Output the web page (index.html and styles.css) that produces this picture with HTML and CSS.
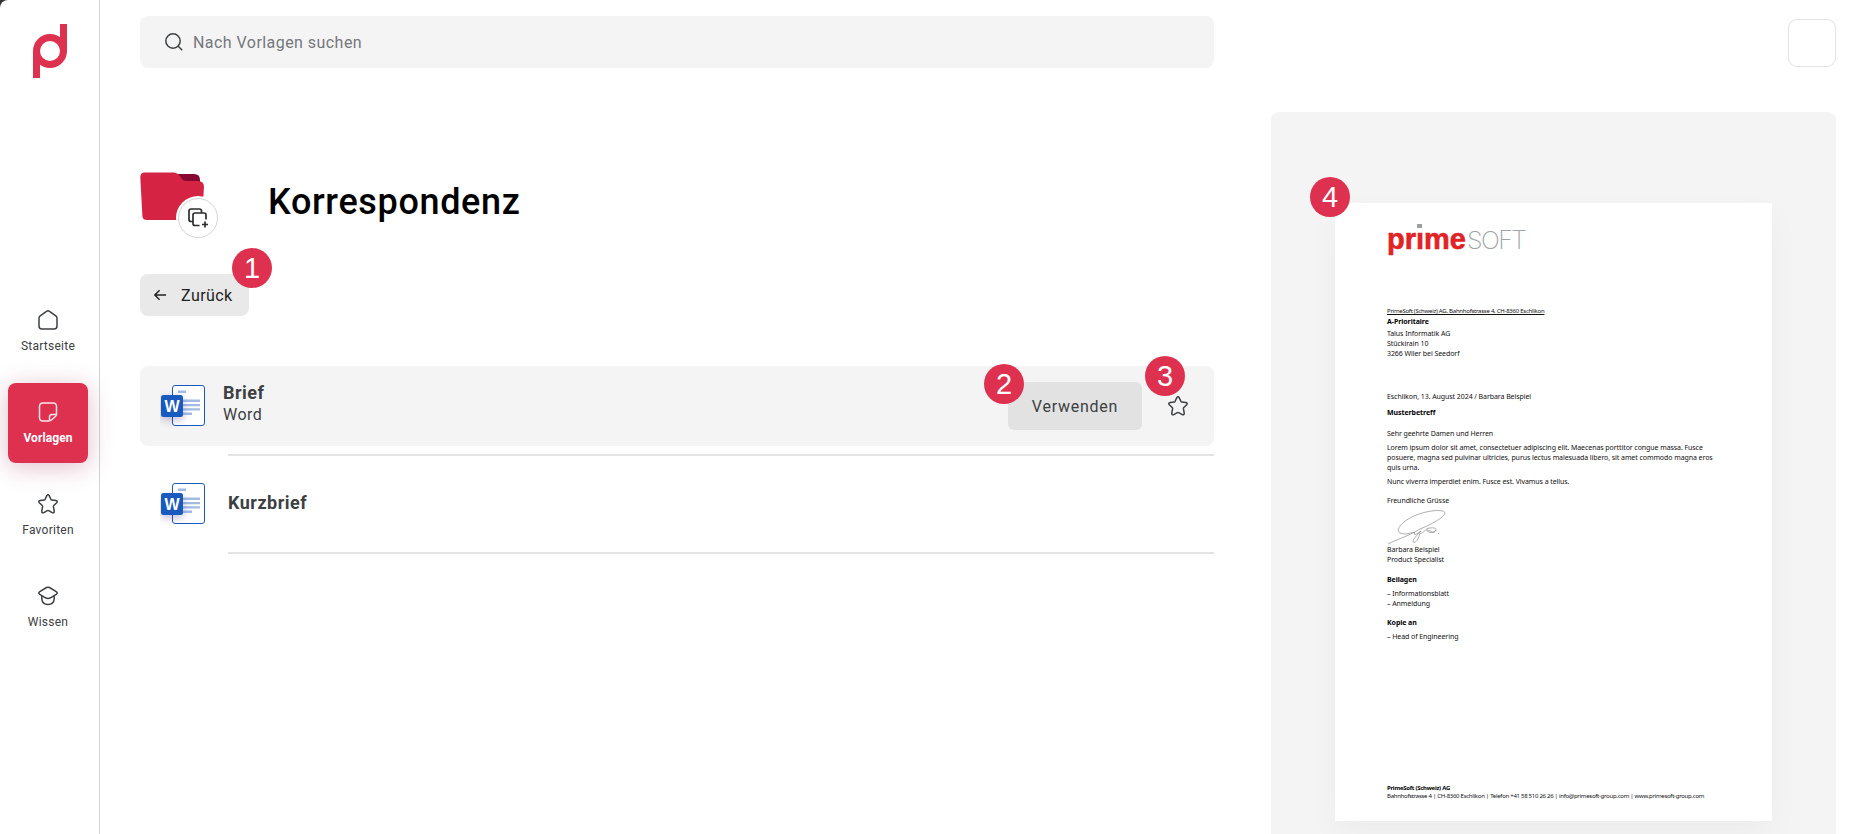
FILE: index.html
```html
<!DOCTYPE html>
<html lang="de">

<head>
    <meta charset="UTF-8">
    <meta name="viewport" content="width=device-width, initial-scale=1.0">
    <title>Korrespondenz - Vorlagen</title>
    <link rel="stylesheet" href="styles.css">
</head>

<body>
    <!-- shared icons -->
    <svg class="sprite">
        <symbol id="icon-star" viewBox="0 0 20 20">
            <path d="M8.8 1.6Q10 -.2 11.2 1.6L12.9 5.3Q13.2 5.9 13.9 6L17.9 6.5Q20 7 18.7 8.7L15.8 11.5Q15.3 12 15.4 12.7L16.2 17Q16.3 19.3 14.2 18.6L10.7 16.6Q10 16.3 9.3 16.6L5.8 18.6Q3.7 19.3 3.8 17L4.6 12.7Q4.7 12 4.2 11.5L1.3 8.7Q0 7 2.1 6.5L6.1 6Q6.8 5.9 7.1 5.3Z" />
        </symbol>
        <symbol id="icon-word" viewBox="0 0 46 44">
            <rect x="12.5" y="1.5" width="32" height="40" rx="2.5" fill="#fff" stroke="#185abd" />
            <path d="M18 7.8h8M23 16.8h17M23 21.1h17M23 25.4h17M23 29.7h9" stroke="#a3bce5" stroke-width="2.4" fill="none" />
            <rect class="word-tile" x="1" y="11" width="22" height="22" rx="2.5" fill="#185abd" />
            <text x="12" y="27.5" text-anchor="middle" class="word-letter">W</text>
        </symbol>
    </svg>

    <div class="app">
        <nav class="sidebar">
            <svg class="logo" viewBox="0 0 34 54">
                <path d="M3.5 54V27a13.5 13.5 0 1 1 13.5 13.5A13.5 13.5 0 0 1 3.5 27M30.5 27V0" />
            </svg>
            <div class="nav">
                <a class="nav-item">
                    <svg class="icon" viewBox="0 0 20 20"><path d="M1 8.2Q1 6.7 2.2 5.8L8.5 1.3Q10 .3 11.5 1.3L17.8 5.8Q19 6.7 19 8.2V16Q19 19 16 19H4Q1 19 1 16Z" /></svg>
                    <span>Startseite</span>
                </a>
                <a class="nav-item active">
                    <svg class="icon" viewBox="0 0 20 20"><path d="M18.5 12.5V4.5Q18.5 1 15 1H5Q1.5 1 1.5 4.5V15.5Q1.5 19 5 19H10.5Q12.5 19 13.8 17.8L17.3 14.5Q18.5 13.5 18.5 12.5H14Q11.5 12.5 11.5 15V19" /></svg>
                    <span>Vorlagen</span>
                </a>
                <a class="nav-item">
                    <svg class="icon"><use href="#icon-star" /></svg>
                    <span>Favoriten</span>
                </a>
                <a class="nav-item">
                    <svg class="icon" viewBox="0 0 20 20"><path d="M8.5 1.5Q10 .8 11.5 1.5L18.2 5.6Q20.2 7 18.2 8.4L12.5 11.8Q10 13 7.5 11.8L1.8 8.4Q-.2 7 1.8 5.6ZM3.8 10V13Q4.3 18.5 10 18.5T16.2 13V10" /></svg>
                    <span>Wissen</span>
                </a>
            </div>
        </nav>

        <main class="content">
            <div class="search">
                <svg class="search-icon" viewBox="0 0 18 18"><circle cx="8" cy="8" r="7.2" /><path d="M13.2 13.2L17.2 17.2" /></svg>
                <span>Nach Vorlagen suchen</span>
            </div>

            <header class="folder-header">
                <div class="folder">
                    <svg viewBox="0 0 68 70">
                        <path d="M34 2H54Q60 2 60 8V20H34Z" fill="#850930" />
                        <path d="M4.5 .5H34Q37 .5 39 3L42 7Q43.5 9 46 9H58Q64 9 64 15L62 44Q61.5 48 57.5 48H7Q2.6 48 2.4 44L.3 5.5Q.3 .5 4.5 .5Z" fill="#d52443" />
                    </svg>
                    <div class="folder-badge">
                        <svg viewBox="0 0 20 20"><path d="M4.5 13.5H3Q1 13.5 1 11.5V3Q1 1 3 1H11.5Q13.5 1 13.5 3V4.5M11.5 17.5H7Q5 17.5 5 15.5V7Q5 5 7 5H16Q18 5 18 7V11.5M17 13.5V19.5M14 16.5H20" /></svg>
                    </div>
                </div>
                <h1>Korrespondenz</h1>
            </header>

            <div class="back">
                <svg viewBox="0 0 14 12"><path d="M6 .8L.9 6L6 11.2M1 6H13" /></svg>
                <span>Zurück</span>
                <b class="marker marker-back">1</b>
            </div>

            <div class="list">
                <div class="row selected">
                    <svg class="file-icon"><use href="#icon-word" /></svg>
                    <div class="file-text">
                        <div class="file-name">Brief</div>
                        <div class="file-type">Word</div>
                    </div>
                    <div class="use-button">
                        Verwenden
                        <b class="marker marker-use">2</b>
                    </div>
                    <div class="favorite">
                        <svg class="icon"><use href="#icon-star" /></svg>
                        <b class="marker marker-favorite">3</b>
                    </div>
                </div>
                <div class="divider"></div>
                <div class="row">
                    <svg class="file-icon"><use href="#icon-word" /></svg>
                    <div class="file-name file-single">Kurzbrief</div>
                </div>
                <div class="divider"></div>
            </div>
        </main>

        <aside class="side">
            <div class="avatar"></div>
            <div class="preview">
                <div class="page">
                    <b class="marker marker-page">4</b>
                    <div class="brand">
                        <span class="brand-prime">pr<span class="brand-i">ı</span>me</span><span class="brand-soft">SOFT</span>
                    </div>
                    <p class="sender">PrimeSoft (Schweiz) AG, Bahnhofstrasse 4, CH-8360 Eschlikon</p>
                    <p class="strong">A-Prioritaire</p>
                    <p class="address">Talus Informatik AG<br>Stückirain 10<br>3266 Wiler bei Seedorf</p>
                    <p class="date">Eschlikon, 13. August 2024 / Barbara Beispiel</p>
                    <p class="strong subject">Musterbetreff</p>
                    <p class="salutation">Sehr geehrte Damen und Herren</p>
                    <p class="body-text">Lorem ipsum dolor sit amet, consectetuer adipiscing elit. Maecenas porttitor congue massa. Fusce<br>posuere, magna sed pulvinar ultricies, purus lectus malesuada libero, sit amet commodo magna eros<br>quis urna.</p>
                    <p class="body-end">Nunc viverra imperdiet enim. Fusce est. Vivamus a tellus.</p>
                    <p class="closing">Freundliche Grüsse</p>
                    <svg class="signature" viewBox="0 0 60 35">
                        <path d="M1 34C10 29 20 27 33 19C48 13 58 6 58 3C57-2 35 1 23 8C12 14 9 21 13 23C20 26 25 21 28 23C26 26 30 24 34 21C27 28 26 30 26 32C29 34 32 28 33 23C38 24 37 18 43 18C49 17 51 20 47 22C43 24 38 20 40 20C45 21 47 24 49 20M51 23.5h1" />
                    </svg>
                    <p>Barbara Beispiel<br>Product Specialist</p>
                    <p class="strong section">Beilagen</p>
                    <p class="items">– Informationsblatt<br>– Anmeldung</p>
                    <p class="strong section">Kopie an</p>
                    <p class="items">– Head of Engineering</p>
                    <div class="page-footer">
                        <p class="strong">PrimeSoft (Schweiz) AG</p>
                        <p>Bahnhofstrasse 4 | CH-8360 Eschlikon | Telefon +41 58 510 26 26 | info@primesoft-group.com | www.primesoft-group.com</p>
                    </div>
                </div>
            </div>
        </aside>
    </div>
</body>

</html>
```
FILE: styles.css
```css
* {
    box-sizing: border-box;
}

body {
    margin: 0;
    background: #333;
    font-family: Roboto, "Liberation Sans", sans-serif;
    color: #3c4043;
}

.sprite {
    display: none;
}

.app {
    display: flex;
    height: 834px;
    overflow: hidden;
    background: #fff;
    border-top-left-radius: 8px;
}

.icon {
    width: 20px;
    height: 20px;
    fill: none;
    stroke: currentColor;
    stroke-width: 1.5;
    stroke-linejoin: round;
    overflow: visible;
}

.sidebar {
    width: 100px;
    border-right: 1px solid #d2d4d6;
}

.logo {
    display: block;
    width: 34px;
    height: 54px;
    margin: 24px 0 213px 33px;
    fill: none;
    stroke: #de3150;
    stroke-width: 7;
}

.nav {
    display: flex;
    flex-direction: column;
    gap: 12px;
    padding-left: 8px;
}

.nav-item {
    display: flex;
    flex-direction: column;
    align-items: center;
    width: 80px;
    height: 80px;
    padding-top: 19px;
    border-radius: 8px;
    font-size: 12px;
    line-height: 16px;
    letter-spacing: 0.25px;
}

.nav-item span {
    margin-top: 8px;
}

.nav-item.active {
    background: #de3150;
    color: #fff;
    font-weight: 700;
    letter-spacing: 0.1px;
    box-shadow: 0 4px 24px rgba(150, 20, 70, 0.28);
}

.active .icon {
    stroke: #ffe3e8;
}

.content {
    width: 1114px;
    padding: 16px 0 0 40px;
}

.search {
    display: flex;
    align-items: center;
    gap: 10px;
    height: 52px;
    padding-left: 25px;
    border-radius: 8px;
    background: #f4f4f4;
    color: #74777d;
    font-size: 16px;
    letter-spacing: 0.45px;
}

.search-icon {
    width: 18px;
    height: 18px;
    fill: none;
    stroke: #3c4043;
    stroke-width: 1.5;
}

.folder-header {
    display: flex;
    height: 70px;
    margin-top: 104px;
}

.folder {
    position: relative;
    width: 128px;
}

.folder > svg {
    width: 68px;
    height: 70px;
}

.folder-badge {
    position: absolute;
    left: 38px;
    top: 26px;
    display: flex;
    align-items: center;
    justify-content: center;
    width: 40px;
    height: 40px;
    border: 1px solid #d4d4d4;
    border-radius: 50%;
    background: #fff;
    box-shadow: 0 0 0 2px #fff;
}

.folder-badge svg {
    width: 20px;
    height: 20px;
    fill: none;
    stroke: #2d2d2d;
    stroke-width: 1.7;
}

h1 {
    margin: 8px 0 0;
    color: #000;
    font-size: 36px;
    font-weight: 500;
    line-height: 44px;
    letter-spacing: 0.65px;
}

.back {
    position: relative;
    display: flex;
    align-items: center;
    gap: 14px;
    width: 109px;
    height: 42px;
    margin-top: 32px;
    padding-left: 14px;
    border-radius: 8px;
    background: #e9e9e9;
    color: #222;
    font-size: 16px;
    letter-spacing: 0.45px;
}

.back svg {
    width: 13px;
    height: 12px;
    fill: none;
    stroke: #222;
    stroke-width: 1.5;
}

.marker {
    position: absolute;
    width: 40px;
    height: 40px;
    border-radius: 50%;
    background: #de3150;
    color: #fff;
    font: 29px/41px "Liberation Sans", sans-serif;
    letter-spacing: 0;
    text-align: center;
}

.marker-back {
    left: 92px;
    top: -26px;
}

.marker-use {
    left: -24px;
    top: -18px;
}

.marker-favorite {
    left: -23px;
    top: -40px;
}

.marker-page {
    left: -25px;
    top: -26px;
}

.list {
    margin-top: 50px;
}

.row {
    display: flex;
    align-items: center;
    height: 80px;
    margin-bottom: 8px;
    padding-left: 20px;
    border-radius: 8px;
}

.row.selected {
    background: #f4f4f4;
}

.row:not(.selected) {
    margin-top: 8px;
}

.file-icon {
    width: 46px;
    height: 44px;
    overflow: visible;
}

.word-tile {
    filter: drop-shadow(0 3px 4px rgba(60, 30, 120, 0.3));
}

.word-letter {
    fill: #fff;
    font: bold 16px "Liberation Sans", sans-serif;
}

.file-text {
    margin-left: 17px;
    flex: 1;
}

.file-name {
    font-size: 18px;
    font-weight: 700;
    line-height: 22px;
    letter-spacing: 0.5px;
}

.file-single {
    margin: 0 0 2px 22px;
}

.file-type {
    margin-bottom: 4px;
    font-size: 16px;
    line-height: 22px;
    letter-spacing: 0.5px;
}

.use-button {
    position: relative;
    width: 134px;
    height: 48px;
    border-radius: 6px;
    background: #e2e2e2;
    font-size: 16px;
    line-height: 49px;
    letter-spacing: 0.75px;
    text-align: center;
}

.favorite {
    position: relative;
    width: 20px;
    height: 20px;
    margin: 0 26px;
}

.divider {
    height: 2px;
    margin-left: 88px;
    background: #e3e3e3;
}

.side {
    width: 565px;
    margin-left: 57px;
}

.avatar {
    width: 48px;
    height: 48px;
    margin: 19px 0 45px auto;
    border: 1px solid #e3e3e3;
    border-radius: 9px;
}

.preview {
    height: 740px;
    padding: 91px 0 0 64px;
    border-radius: 8px;
    background: #f4f4f4;
}

/* letter page */
.page {
    position: relative;
    width: 437px;
    height: 618px;
    padding: 21px 0 0 52px;
    background: #fff;
    color: #111;
    box-shadow: 0 12px 32px rgba(0, 0, 0, 0.035);
    font-family: "Noto Sans", sans-serif;
    font-size: 7px;
    line-height: 10px;
    letter-spacing: -0.07px;
    white-space: nowrap;
}

.page p {
    margin: 0;
}

.page .strong {
    color: #000;
    font-weight: 700;
}

.brand {
    display: flex;
    align-items: baseline;
    height: 82px;
    font-family: "Liberation Sans", sans-serif;
    line-height: 30px;
}

.brand-prime {
    color: #e12326;
    font-size: 29px;
    font-weight: 700;
    letter-spacing: 0;
    -webkit-text-stroke: 0.6px #e12326;
}

.brand-i {
    position: relative;
}

.brand-i::before {
    content: "";
    position: absolute;
    left: 1px;
    top: 1px;
    width: 5px;
    height: 4px;
    background: #9ba1a6;
}

.brand-soft {
    margin-left: 1px;
    color: #a0a4a7;
    font-family: Inter, sans-serif;
    font-size: 25px;
    font-weight: 200;
    letter-spacing: -1.6px;
}

.page .sender {
    margin-bottom: 1px;
    font-size: 6px;
    text-decoration: underline;
    letter-spacing: -0.25px;
}

.page .address {
    margin-top: 2px;
}

.page .date {
    margin-top: 33px;
}

.page .subject {
    margin-top: 6px;
}

.page .salutation {
    margin-top: 11px;
}

.page .body-text {
    margin-top: 4px;
}

.page .body-end {
    margin-top: 4px;
}

.page .closing {
    margin-top: 9px;
}

.signature {
    display: block;
    width: 60px;
    height: 35px;
    margin: 4px 0 0;
    fill: none;
    stroke: #777;
    stroke-width: 0.6;
}

.page .section {
    margin-top: 9.5px;
}

.page .items {
    margin-top: 4px;
}

.page-footer {
    position: absolute;
    left: 52px;
    bottom: 21px;
    font-size: 6px;
    line-height: 8px;
    letter-spacing: -0.27px;
}
```
